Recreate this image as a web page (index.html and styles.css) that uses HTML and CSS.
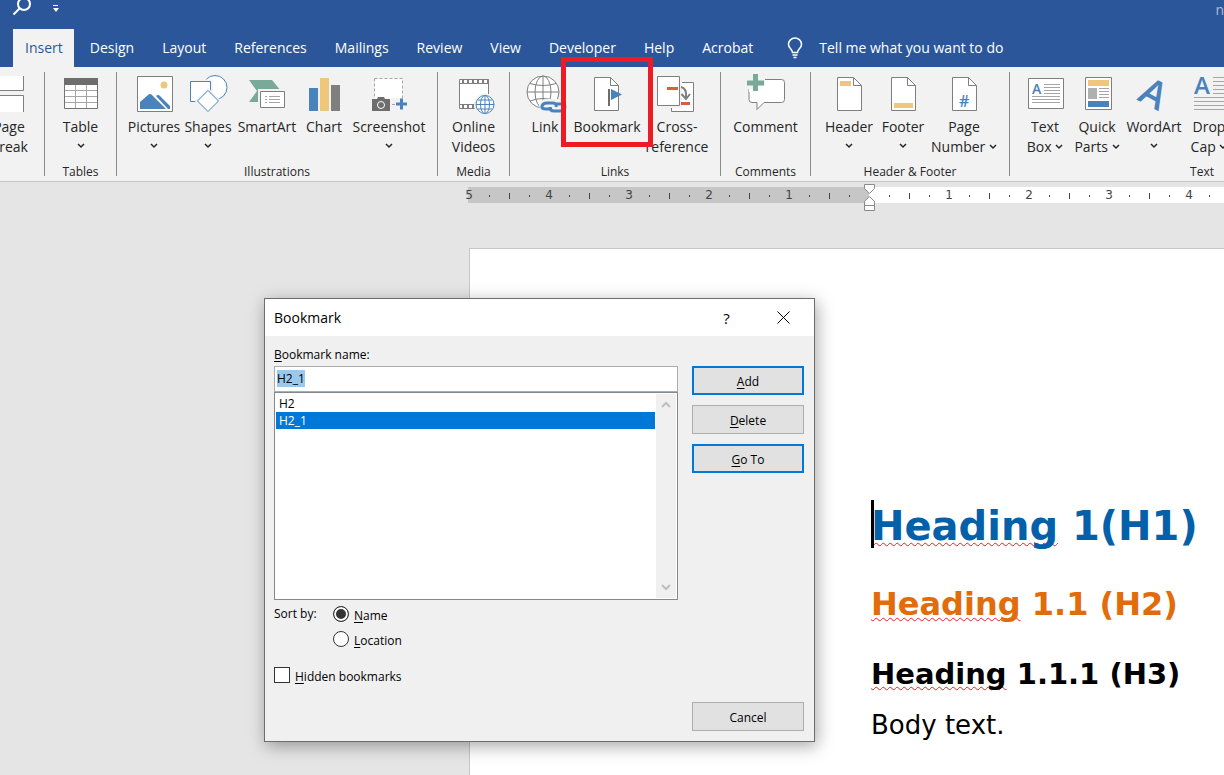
FILE: index.html
```html
<!DOCTYPE html>
<html lang="en">

<head>
    <meta charset="UTF-8">
    <meta name="viewport" content="width=device-width, initial-scale=1.0">
    <title>Word - Bookmark</title>
    <link rel="stylesheet" href="styles.css">
</head>

<body>
    <header class="top-bar">
        <div class="title-bar">
            <svg class="search-icon" width="20" height="16" viewBox="0 0 20 16" fill="none" stroke="#fff">
                <circle cx="12" cy="4" r="6" stroke-width="2" />
                <path d="M7.500 8.500L1.500 14.500" stroke-width="2" />
            </svg>
            <svg class="customize-icon" width="8" height="8" viewBox="0 0 8 8" fill="#fff">
                <path d="M1 0h5v1H1zM1 3h6L4 7z" />
            </svg>
            <span class="doc-title">n</span>
        </div>
        <nav class="tabs">
            <a href="#" class="tab active">Insert</a>
            <a href="#" class="tab">Design</a>
            <a href="#" class="tab">Layout</a>
            <a href="#" class="tab">References</a>
            <a href="#" class="tab">Mailings</a>
            <a href="#" class="tab">Review</a>
            <a href="#" class="tab">View</a>
            <a href="#" class="tab">Developer</a>
            <a href="#" class="tab">Help</a>
            <a href="#" class="tab">Acrobat</a>
            <a href="#" class="tell-me">
                <svg width="16" height="22" viewBox="0 0 16 22" fill="none" stroke="#fff" stroke-width="1.500">
                    <path d="M5.500 15.500C5.500 12 1.500 11.500 1.500 7.500a6.500 6.500 0 0 1 13 0c0 4-4 4.500-4 8z" />
                    <path d="M5.500 18h5M6.500 20.500h3" />
                </svg>
                Tell me what you want to do
            </a>
        </nav>
    </header>

    <section class="ribbon">
        <div class="group group-pages">
            <div class="tools">
                <button class="tool">
                    <svg class="icon" viewBox="0 0 40 40" fill="#fff" stroke="#7f7f7f">
                        <path d="M6.500 1v14.500h28V1M6.500 37V20.500h28V37" />
                    </svg>
                    <span>Page</span>
                    <span>Break</span>
                </button>
            </div>
        </div>

        <div class="group group-tables">
            <div class="tools">
                <button class="tool">
                    <svg class="icon" viewBox="0 0 40 40">
                        <path d="M3.500 3.500h33v30h-33z" fill="#fff" stroke="#737373" />
                        <path d="M3 3h34v7H3z" fill="#6d6d6d" />
                        <path d="M4 15.500h32M4 21.500h32M4 27.500h32M14.500 10v23M25.500 10v23" stroke="#a6a6a6" />
                    </svg>
                    <span>Table</span>
                    <svg class="chevron" viewBox="0 0 8 6"><path d="M1 1l3 3 3-3" /></svg>
                </button>
            </div>
            <p class="group-name">Tables</p>
        </div>

        <div class="group group-illustrations">
            <div class="tools">
                <button class="tool">
                    <svg class="icon" viewBox="0 0 40 40">
                        <path d="M3.500 1.500h35v35h-35z" fill="#fff" stroke="#7f7f7f" />
                        <circle cx="30" cy="10" r="3.500" fill="#eec77b" />
                        <path d="M6 34v-7l8-7q2-2 4 0l14 14zM22 21q2-2 4 0l10 10v3h-2z" fill="#4a82bc" />
                    </svg>
                    <span>Pictures</span>
                    <svg class="chevron" viewBox="0 0 8 6"><path d="M1 1l3 3 3-3" /></svg>
                </button>
                <button class="tool">
                    <svg class="icon" viewBox="0 0 40 40" fill="#fff" stroke="#4a82bc">
                        <circle cx="27" cy="12.500" r="12" />
                        <path d="M2.500 6.500h20v20h-20z" stroke="#f2f2f2" stroke-width="4" />
                        <path d="M2.500 6.500h20v20h-20z" />
                        <path d="M20 15.500L30.500 26 20 36.500 9.500 26z" stroke="#f2f2f2" stroke-width="4" />
                        <path d="M20 15.500L30.500 26 20 36.500 9.500 26z" />
                    </svg>
                    <span>Shapes</span>
                    <svg class="chevron" viewBox="0 0 8 6"><path d="M1 1l3 3 3-3" /></svg>
                </button>
                <button class="tool wide">
                    <svg class="icon" viewBox="0 0 40 40">
                        <path d="M2 5h23l9 11-9 11H2l8-11z" fill="#79a999" />
                        <path d="M11 14h29v22H11z" fill="#f2f2f2" />
                        <path d="M13.500 16.500h24v16h-24z" fill="#fff" stroke="#7f7f7f" />
                        <path d="M18 21.500h2M18 24.500h2M18 27.500h2M22 21.500h11M22 24.500h11M22 27.500h11" stroke="#a6a6a6" />
                    </svg>
                    <span>SmartArt</span>
                </button>
                <button class="tool narrow">
                    <svg class="icon" viewBox="0 0 40 40">
                        <path d="M5 13h9v23H5z" fill="#4a82bc" />
                        <path d="M16 3h9v33h-9z" fill="#eec77b" />
                        <path d="M27 10h9v26h-9z" fill="#7f7f7f" />
                    </svg>
                    <span>Chart</span>
                </button>
                <button class="tool extra-wide">
                    <svg class="icon" viewBox="0 0 40 40">
                        <path d="M5.500 3.500h28v26h-28z" fill="#fff" stroke="#a6a6a6" stroke-dasharray="3 2" />
                        <path d="M2 23h18l2 2v13H2zM22 23h16v14H22z" fill="#f2f2f2" />
                        <path d="M3 24h5l1-2h6l1 2h5v12H3z" fill="#6d6d6d" />
                        <circle cx="12" cy="30" r="3.500" fill="none" stroke="#fff" />
                        <path d="M23 29.500h3" stroke="#a6a6a6" />
                        <path d="M27 29h11M32.500 23.500v11" stroke="#4a82bc" stroke-width="3" />
                    </svg>
                    <span>Screenshot</span>
                    <svg class="chevron" viewBox="0 0 8 6"><path d="M1 1l3 3 3-3" /></svg>
                </button>
            </div>
            <p class="group-name">Illustrations</p>
        </div>

        <div class="group group-media">
            <div class="tools">
                <button class="tool">
                    <svg class="icon" viewBox="0 0 40 40">
                        <path d="M5.500 4.500h29v29h-29z" fill="#fff" stroke="#7f7f7f" />
                        <path d="M6 8.500h28M6 29.500h28" stroke="#7f7f7f" />
                        <path d="M8 6.500h27M8 31.500h27" stroke="#7f7f7f" stroke-width="4" stroke-dasharray="2 3" />
                        <circle cx="31" cy="29.500" r="11" fill="#f2f2f2" />
                        <g fill="#fff" stroke="#4a82bc">
                            <circle cx="31" cy="29.500" r="9" />
                            <ellipse cx="31" cy="29.500" rx="4.500" ry="9" />
                            <path d="M31 20.500v18M22 29.500h18M24 25h14M24 34h14" />
                        </g>
                    </svg>
                    <span>Online</span>
                    <span>Videos</span>
                </button>
            </div>
            <p class="group-name">Media</p>
        </div>

        <div class="group group-links">
            <div class="tools">
                <button class="tool link-tool">
                    <svg class="icon" viewBox="0 0 40 40">
                        <g fill="#fff" stroke="#7f7f7f">
                            <circle cx="18" cy="17" r="16" />
                            <ellipse cx="18" cy="17" rx="8" ry="16" />
                            <path d="M18 1v32M2 17h32M5 8.500q13 4 26 0M5 26q13-5 26 0" fill="none" />
                        </g>
                        <path d="M14 30q2-6 8-6h18v16H16z" fill="#f2f2f2" />
                        <g fill="none" stroke="#4a82bc" stroke-width="3">
                            <path d="M27 34h-6q-5 0-4-3 1-3 5-3h6q4 0 3 4" />
                            <path d="M25 32q0 4 4 4h6q5 0 5-4t-4-3h-5" />
                        </g>
                    </svg>
                    <span>Link</span>
                </button>
                <button class="tool bookmark-tool">
                    <svg class="icon" viewBox="0 0 40 40">
                        <path d="M7.500 2.500h16l8 8v25h-24z" fill="#fff" stroke="#7f7f7f" />
                        <path d="M23.500 2.500v8h8" fill="none" stroke="#7f7f7f" />
                        <path d="M21 14h2v17h-2z" fill="#6d6d6d" />
                        <path d="M24 14l11 5.500L24 25z" fill="#4a82bc" />
                    </svg>
                    <span>Bookmark</span>
                </button>
                <button class="tool cross-tool">
                    <svg class="icon" viewBox="0 0 40 40">
                        <path d="M14.500 7.500h22v29h-22z" fill="#fff" stroke="#7f7f7f" />
                        <path d="M0 0h25v33H0z" fill="#f2f2f2" />
                        <path d="M.5 1.500h22v29h-22z" fill="#fff" stroke="#7f7f7f" />
                        <path d="M10 12h11v3H10zM24 27h9v3h-9z" fill="#d65f3f" />
                        <path d="M24 12q6 1 5 11M24.500 19l4.500 5 4-5" fill="none" stroke="#7f7f7f" stroke-width="2" />
                    </svg>
                    <span>Cross-</span>
                    <span>reference</span>
                </button>
            </div>
            <p class="group-name">Links</p>
        </div>

        <div class="group group-comments">
            <div class="tools">
                <button class="tool">
                    <svg class="icon" viewBox="0 0 40 40">
                        <path d="M5.500 4.500h30q3 0 3 3v17q0 3-3 3H18l-7 7v-7H6q-3 0-3-3v-20z" fill="#fff" stroke="#7f7f7f" />
                        <path d="M0 0h19v14H0z" fill="#f2f2f2" />
                        <path d="M3 14h9v-3h7V5h3v12H3z" fill="#fff" />
                        <path d="M1 8h17M9.500-1v17" stroke="#79a999" stroke-width="5" />
                    </svg>
                    <span>Comment</span>
                </button>
            </div>
            <p class="group-name">Comments</p>
        </div>

        <div class="group group-header">
            <div class="tools">
                <button class="tool">
                    <svg class="icon" viewBox="0 0 40 40">
                        <path d="M8.500 2.500h16l8 8v25h-24z" fill="#fff" stroke="#7f7f7f" />
                        <path d="M24.500 2.500v8h8" fill="none" stroke="#7f7f7f" />
                        <path d="M11 6h11v5H11z" fill="#eec77b" />
                    </svg>
                    <span>Header</span>
                    <svg class="chevron" viewBox="0 0 8 6"><path d="M1 1l3 3 3-3" /></svg>
                </button>
                <button class="tool">
                    <svg class="icon" viewBox="0 0 40 40">
                        <path d="M8.500 2.500h16l8 8v25h-24z" fill="#fff" stroke="#7f7f7f" />
                        <path d="M24.500 2.500v8h8" fill="none" stroke="#7f7f7f" />
                        <path d="M11 28h19v5H11z" fill="#eec77b" />
                    </svg>
                    <span>Footer</span>
                    <svg class="chevron" viewBox="0 0 8 6"><path d="M1 1l3 3 3-3" /></svg>
                </button>
                <button class="tool number-tool">
                    <svg class="icon" viewBox="0 0 40 40">
                        <path d="M8.500 2.500h16l8 8v25h-24z" fill="#fff" stroke="#7f7f7f" />
                        <path d="M24.500 2.500v8h8" fill="none" stroke="#7f7f7f" />
                        <text x="15" y="32" class="icon-hash">#</text>
                    </svg>
                    <span>Page</span>
                    <span>Number <svg class="chevron" viewBox="0 0 8 6"><path d="M1 1l3 3 3-3" /></svg></span>
                </button>
            </div>
            <p class="group-name">Header &amp; Footer</p>
        </div>

        <div class="group group-text">
            <div class="tools">
                <button class="tool narrow">
                    <svg class="icon" viewBox="0 0 40 40">
                        <path d="M3.500 3.500h35v30h-35z" fill="#fff" stroke="#7f7f7f" />
                        <text x="7" y="19" class="icon-a-small">A</text>
                        <path d="M19 9.500h16M19 12.500h16M19 15.500h16M19 18.500h16M7 21.500h28M7 24.500h28M7 27.500h28" stroke="#a6a6a6" />
                    </svg>
                    <span>Text</span>
                    <span>Box <svg class="chevron" viewBox="0 0 8 6"><path d="M1 1l3 3 3-3" /></svg></span>
                </button>
                <button class="tool">
                    <svg class="icon" viewBox="0 0 40 40">
                        <path d="M8.500 2.500h26v32h-26z" fill="#fff" stroke="#7f7f7f" />
                        <path d="M11 5h21v6H11z" fill="#eec77b" />
                        <path d="M11 13h9v11h-9z" fill="#b0b0b0" />
                        <path d="M22 13.500h10M22 16.500h10M22 19.500h10M22 22.500h10" stroke="#a6a6a6" />
                        <path d="M11 26h21v6H11z" fill="#4a82bc" />
                    </svg>
                    <span>Quick</span>
                    <span>Parts <svg class="chevron" viewBox="0 0 8 6"><path d="M1 1l3 3 3-3" /></svg></span>
                </button>
                <button class="tool wordart-tool">
                    <svg class="icon" viewBox="0 0 40 40">
                        <text x="20" y="32" text-anchor="middle" class="icon-wordart" transform="rotate(28 20 18)">A</text>
                    </svg>
                    <span>WordArt</span>
                    <svg class="chevron" viewBox="0 0 8 6"><path d="M1 1l3 3 3-3" /></svg>
                </button>
                <button class="tool narrow">
                    <svg class="icon" viewBox="0 0 40 40">
                        <text x="5" y="19" class="icon-dropcap">A</text>
                        <path d="M24 2.500h16M24 6.500h16M24 10.500h16M24 14.500h16M24 18.500h16M5 22.500h35M5 26.500h35M5 30.500h35M5 34.500h35" stroke="#a6a6a6" />
                    </svg>
                    <span>Drop</span>
                    <span>Cap <svg class="chevron" viewBox="0 0 8 6"><path d="M1 1l3 3 3-3" /></svg></span>
                </button>
            </div>
            <p class="group-name">Text</p>
        </div>
    </section>

    <main class="workspace">
        <div class="ruler">
            <div class="ruler-side margin-side" id="rulerLeft"></div>
            <div class="ruler-side text-side" id="rulerRight"></div>
            <svg class="indent-marker" width="12" height="30" viewBox="0 0 12 30" fill="#fff" stroke="#8a8a8a">
                <path d="M.5 1.500h10v4l-5 5-5-5zM5.500 13.500l5 5v9H.5v-9zM.5 22.500h10" />
            </svg>
        </div>

        <article class="page">
            <h1><span class="caret"></span><span class="misspelled">Heading</span> 1(H1)</h1>
            <h2><span class="misspelled">Heading</span> 1.1 (H2)</h2>
            <h3><span class="misspelled">Heading</span> 1.1.1 (H3)</h3>
            <p>Body text.</p>
        </article>
    </main>

    <form class="dialog" role="dialog" aria-labelledby="dialogTitle">
        <div class="dialog-title">
            <span id="dialogTitle">Bookmark</span>
            <button type="button" class="title-button">?</button>
            <button type="button" class="title-button" aria-label="Close">
                <svg width="13" height="13" viewBox="0 0 13 13" stroke="#000"><path d="M.5.5l12 12M12.500.5l-12 12" /></svg>
            </button>
        </div>
        <div class="dialog-body">
            <div class="fields">
                <label for="bookmarkName"><u>B</u>ookmark name:</label>
                <input type="text" id="bookmarkName" value="H2_1" autocomplete="off" spellcheck="false">
                <div class="list">
                    <select id="bookmarkList" size="12" aria-label="Bookmarks">
                        <option>H2</option>
                        <option selected>H2_1</option>
                    </select>
                    <div class="scrollbar">
                        <svg width="10" height="7" viewBox="0 0 10 7"><path d="M1 6l4-4 4 4" /></svg>
                        <svg width="10" height="7" viewBox="0 0 10 7"><path d="M1 1l4 4 4-4" /></svg>
                    </div>
                </div>
                <div class="sort">
                    <span class="sort-label">Sort by:</span>
                    <div class="sort-options">
                        <label><input type="radio" name="sort" checked><span><u>N</u>ame</span></label>
                        <label><input type="radio" name="sort"><span><u>L</u>ocation</span></label>
                    </div>
                </div>
                <label class="hidden-option"><input type="checkbox"><span><u>H</u>idden bookmarks</span></label>
            </div>
            <div class="actions">
                <button type="button" class="action primary"><span><u>A</u>dd</span></button>
                <button type="button" class="action"><span><u>D</u>elete</span></button>
                <button type="button" class="action primary"><span><u>G</u>o To</span></button>
                <button type="button" class="action cancel">Cancel</button>
            </div>
        </div>
    </form>

    <script src="script.js"></script>
</body>

</html>
```
FILE: styles.css
```css
:root {
    --word-blue: #2b579a;
    --ribbon-color: #f2f2f2;
    --canvas-color: #e5e5e5;
    --line-color: #c6c6c6;
    --accent: #0078d7;
    --icon-blue: #4a82bc;
    --ui-font: "Open Sans", "Noto Sans", sans-serif;
    --doc-font: "DejaVu Sans", sans-serif;
}

* {
    box-sizing: border-box;
}

body {
    margin: 0;
    min-height: 100vh;
    display: flex;
    flex-direction: column;
    position: relative;
    background: var(--canvas-color);
    font-family: var(--ui-font);
    color: #262626;
}

button {
    font-family: inherit;
    color: inherit;
    padding: 0;
    border: none;
    background: none;
}

/* Title bar and tabs */
.top-bar {
    background: var(--word-blue);
    color: #fff;
}

.title-bar {
    display: flex;
    height: 29px;
    padding-left: 12px;
}

.customize-icon {
    margin: 5px 0 0 20px;
}

.doc-title {
    margin-left: auto;
    font-size: 14px;
    line-height: 19px;
    color: #a9bbd6;
}

.tabs {
    display: flex;
    gap: 4px;
    height: 38px;
    padding-left: 13px;
    font-size: 14px;
    line-height: 38px;
    white-space: nowrap;
}

.tabs a {
    color: #fff;
    text-decoration: none;
}

.tab {
    padding: 0 12px;
}

.tabs .active {
    padding-right: 11px;
    background: var(--ribbon-color);
    color: var(--word-blue);
}

.tell-me {
    display: flex;
    align-items: center;
    gap: 16px;
    margin-left: 18px;
}

/* Ribbon */
.ribbon {
    display: flex;
    position: relative;
    height: 115px;
    padding: 5px 0;
    background: var(--ribbon-color);
    border-bottom: 1px solid var(--line-color);
    overflow-x: clip;
    overflow-y: visible;
}

.group {
    flex: none;
    display: flex;
    flex-direction: column;
    justify-content: space-between;
    border-right: 1px solid #8a8a8a;
}

.tools {
    display: flex;
    justify-content: center;
    padding-top: 3px;
}

.group-name {
    margin: 0;
    font-size: 12px;
    line-height: 8px;
    text-align: center;
}

.group-pages {
    width: 45px;
    overflow: hidden;
}

.group-pages .tools {
    justify-content: flex-end;
    padding-right: 8px;
}

.group-tables,
.group-media {
    width: 72px;
}

.group-illustrations {
    width: 321px;
}

.group-illustrations .tools {
    justify-content: flex-start;
    padding-left: 10px;
}

.group-links {
    width: 211px;
}

.group-comments {
    width: 90px;
}

.group-header {
    width: 199px;
}

.group-text {
    width: 384px;
    border-right: none;
}

.group-text .tools {
    justify-content: flex-start;
    padding-left: 10px;
}

.tool {
    display: flex;
    flex-direction: column;
    align-items: center;
    flex: none;
    position: relative;
    width: 54px;
    font-size: 14px;
    line-height: 20px;
    white-space: nowrap;
}

.tool.narrow {
    width: 50px;
}

.tool.wide {
    width: 64px;
}

.tool.extra-wide {
    width: 80px;
}

.link-tool {
    width: 44px;
}

.bookmark-tool {
    width: 80px;
}

.cross-tool,
.wordart-tool {
    width: 60px;
}

.number-tool {
    width: 68px;
}

.icon {
    flex: none;
    width: 40px;
    height: 42px;
    padding-bottom: 2px;
    overflow: visible;
}

.chevron {
    width: 8px;
    height: 6px;
    fill: none;
    stroke: #262626;
    stroke-width: 1.5;
}

.tool > .chevron {
    margin-top: 6px;
}

.tool span .chevron {
    margin-bottom: 2px;
}

.icon text {
    font-family: var(--ui-font);
    fill: var(--icon-blue);
    font-weight: 600;
}

.icon .icon-hash {
    font-size: 16px;
}

.icon .icon-a-small {
    font-size: 14px;
}

.icon .icon-dropcap {
    font-size: 24px;
}

.icon .icon-wordart {
    font-size: 38px;
}

/* Red frame round the Bookmark command */
.bookmark-tool::after {
    content: "";
    position: absolute;
    z-index: 2;
    top: -18px;
    left: -6px;
    width: 82px;
    height: 80px;
    border: 5px solid #ed1c24;
}

/* Ruler */
.workspace {
    flex: 1;
    display: flex;
    flex-direction: column;
    overflow: hidden;
}

.ruler {
    display: flex;
    position: relative;
    height: 16px;
    margin: 5px 0 45px 468px;
}

.ruler-side {
    display: flex;
    font-family: var(--doc-font);
    font-size: 12px;
    line-height: 18px;
    color: #444;
}

.margin-side {
    flex: none;
    justify-content: flex-end;
    width: 401px;
    padding-right: 10px;
    background: var(--line-color);
}

.text-side {
    flex: 1;
    overflow: hidden;
    padding-left: 10px;
    background: #fff;
}

.mark {
    flex: none;
    display: flex;
    justify-content: center;
    align-items: center;
    width: 20px;
}

.mark.dot::before,
.mark.half::before {
    content: "";
    width: 1px;
    height: 2px;
    margin-top: 2px;
    background: #444;
}

.mark.half::before {
    height: 6px;
}

.indent-marker {
    position: absolute;
    top: -4px;
    left: 396px;
}

/* Document page */
.page {
    flex: 1;
    margin-left: 469px;
    padding: 251px 0 0 401px;
    background: #fff;
    border: 1px solid var(--line-color);
    border-width: 1px 0 0 1px;
    font-family: var(--doc-font);
    color: #000;
    white-space: nowrap;
}

.page h1,
.page h2,
.page h3,
.page p {
    margin: 0;
}

.page h1 {
    position: relative;
    font-size: 40px;
    line-height: 52px;
    color: #0460a9;
}

.page h2 {
    margin-top: 32px;
    font-size: 32px;
    line-height: 40px;
    color: #e36c0a;
}

.page h3 {
    margin-top: 32px;
    font-size: 29px;
    line-height: 36px;
}

.page p {
    margin-top: 16px;
    font-size: 26px;
    line-height: 34px;
}

.misspelled {
    text-decoration: underline wavy #ed1c24 1px;
    text-decoration-skip-ink: none;
    text-underline-offset: 2px;
}

.caret {
    position: absolute;
    top: 0;
    left: 0;
    width: 3px;
    height: 48px;
    background: #000;
}

/* Bookmark dialog */
.dialog {
    position: absolute;
    top: 298px;
    left: 264px;
    width: 551px;
    background: #f0f0f0;
    border: 1px solid #6d6d6d;
    box-shadow: 2px 4px 16px rgba(0, 0, 0, 0.35);
    font-size: 12px;
    color: #000;
}

.dialog-title {
    display: flex;
    align-items: center;
    height: 37px;
    padding: 0 2px 0 9px;
    background: #fff;
    font-size: 14px;
}

.dialog-title span {
    flex: 1;
}

.title-button {
    display: flex;
    justify-content: center;
    align-items: center;
    width: 57px;
    height: 36px;
    font-size: 15px;
}

.dialog-body {
    display: flex;
    gap: 14px;
    padding: 11px 10px 10px 9px;
}

.fields {
    flex: 1;
    display: flex;
    flex-direction: column;
    line-height: 16px;
}

#bookmarkName {
    height: 26px;
    margin-top: 3px;
    padding: 0 2px 2px;
    border: 1px solid #acacac;
    border-radius: 0;
    outline: none;
    background: #fff;
    font: 12px var(--ui-font);
    color: #000;
}

#bookmarkName::selection {
    background: #99c9ef;
    color: #000;
}

.list {
    display: flex;
    height: 208px;
    padding: 1px;
    background: #fff;
    border: 1px solid #828790;
}

#bookmarkList {
    flex: 1;
    padding: 1px 0 0;
    border: none;
    border-radius: 0;
    outline: none;
    overflow: hidden;
    background: #fff;
    font: 12px var(--ui-font);
    color: #000;
}

#bookmarkList option {
    min-height: 17px;
    padding: 0 3px;
    line-height: 17px;
}

#bookmarkList option:checked {
    background: linear-gradient(var(--accent), var(--accent));
    color: #fff;
}

.scrollbar {
    display: flex;
    flex-direction: column;
    justify-content: space-between;
    align-items: center;
    width: 20px;
    margin-left: 1px;
    padding: 7px 0;
    background: #f0f0f0;
    fill: none;
    stroke: #bfbfbf;
    stroke-width: 2;
}

.sort {
    display: flex;
    margin-top: 6px;
}

.sort-label {
    width: 59px;
}

.sort-options {
    display: flex;
    flex-direction: column;
    gap: 8px;
}

.sort-options label,
.hidden-option {
    display: flex;
    gap: 5px;
}

.sort-options span,
.hidden-option span {
    padding-top: 3px;
    line-height: 14px;
}

.hidden-option {
    margin: 19px 0 47px;
}

input[type="radio"],
input[type="checkbox"] {
    appearance: none;
    width: 16px;
    height: 16px;
    margin: 0;
    background: #fff;
    border: 1px solid #333;
}

input[type="radio"] {
    border-radius: 50%;
}

input[type="radio"]:checked {
    background: #333;
    box-shadow: inset 0 0 0 2px #fff;
}

.actions {
    display: flex;
    flex-direction: column;
    gap: 10px;
    width: 112px;
    padding-top: 19px;
}

.action {
    height: 29px;
    padding-top: 2px;
    background: #e1e1e1;
    border: 1px solid #adadad;
    font-size: 12px;
}

.action.primary {
    border: 2px solid var(--accent);
}

.action.cancel {
    margin-top: auto;
}

u {
    text-underline-offset: 2px;
}
```
FILE: script.js
```js
// Four marks per inch: the number, a dot, the half-inch line, a dot
const marks = ["number", "dot", "half", "dot"];

function addMark(ruler, type, text) {
    const mark = document.createElement("span");
    mark.className = "mark " + type;
    if (type === "number") mark.textContent = text;
    ruler.appendChild(mark);
}

const rulerLeft = document.getElementById("rulerLeft");
for (let i = 20; i > 0; i--) {
    addMark(rulerLeft, marks[i % 4], i / 4);
}

const rulerRight = document.getElementById("rulerRight");
for (let i = 1; i < 40; i++) {
    addMark(rulerRight, marks[i % 4], i / 4);
}

// Open the dialog with the name selected
const bookmarkName = document.getElementById("bookmarkName");
bookmarkName.focus();
bookmarkName.select();
```
